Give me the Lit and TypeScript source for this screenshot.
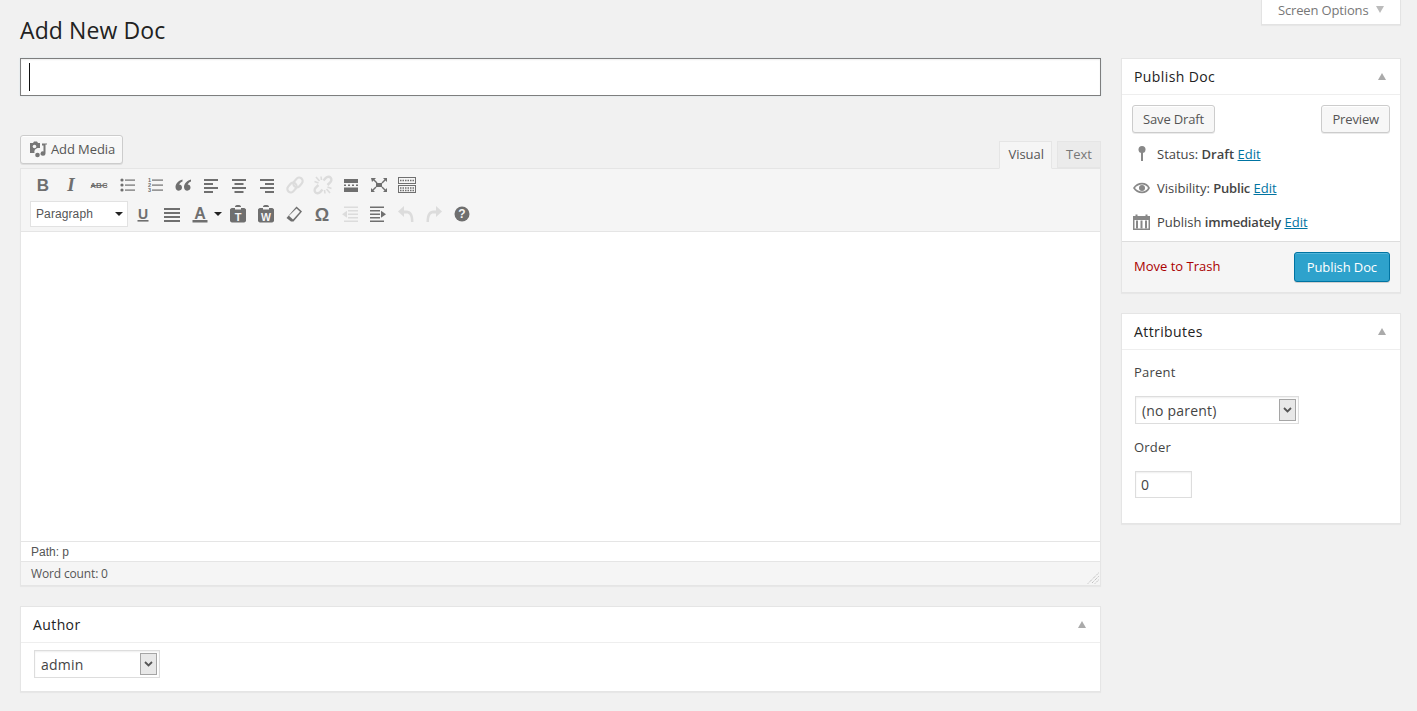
import { LitElement, html, css, svg } from "lit";
import { customElement } from "lit/decorators.js";

const G = "#6f6f6f";
const D = "#dcdcdc";

const lines = (rows: [number, number, number, number?][], c: string) =>
  rows.map(([x, y, w, h]) => svg`<rect x=${x} y=${y} width=${w} height=${h ?? 2} fill=${c}></rect>`);

const glyph = (t: string, size: number, c: string, font: string, weight = "700", style = "normal", y = 15.5, x = 10) =>
  svg`<text x=${x} y=${y} text-anchor="middle" font-family=${font} font-size=${size} font-weight=${weight} font-style=${style} fill=${c}>${t}</text>`;

const SERIF = "'Liberation Serif', serif";
const SANS = "'Liberation Sans', sans-serif";

const ICONS: Record<string, (c: string) => unknown> = {
  bold: (c) => glyph("B", 17, c, SANS, "700", "normal", 16),
  italic: (c) => glyph("I", 19, c, SERIF, "700", "italic", 16),
  strike: (c) => svg`${glyph("ABC", 8, c, SANS, "700", "normal", 13)}<rect x="2" y="10" width="16" height="1" fill=${c}></rect>`,
  ul: (c) => svg`<circle cx="5" cy="5" r="1.6" fill=${c}></circle><circle cx="5" cy="10" r="1.6" fill=${c}></circle><circle cx="5" cy="15" r="1.6" fill=${c}></circle>${lines([[8, 4.5, 10, 1.2], [8, 9.5, 10, 1.2], [8, 14.5, 10, 1.2]], c)}`,
  ol: (c) => svg`${glyph("1", 5.5, c, SANS, "700", "normal", 7, 4.5)}${glyph("2", 5.5, c, SANS, "700", "normal", 12, 4.5)}${glyph("3", 5.5, c, SANS, "700", "normal", 17, 4.5)}${lines([[7, 4.5, 11, 1.2], [7, 9.5, 11, 1.2], [7, 14.5, 11, 1.2]], c)}`,
  quote: (c) => svg`<path d="M9.5 4.5C6 5.500 2.500 8.400 2.500 12c0 2.200 1.400 3.700 3.300 3.700s3.200-1.400 3.200-3.100-1.200-3-2.900-3c.5-1.300 1.900-2.500 3.400-3.200zM18 4.500c-3.500 1-7 3.900-7 7.500 0 2.200 1.400 3.700 3.300 3.700s3.200-1.400 3.200-3.100-1.200-3-2.900-3c.5-1.300 1.900-2.500 3.400-3.200z" fill=${c}></path>`,
  left: (c) => svg`${lines([[3, 4, 14], [3, 8, 9], [3, 12, 14], [3, 16, 9]], c)}`,
  center: (c) => svg`${lines([[3, 4, 14], [5.5, 8, 9], [3, 12, 14], [5.5, 16, 9]], c)}`,
  right: (c) => svg`${lines([[3, 4, 14], [8, 8, 9], [3, 12, 14], [8, 16, 9]], c)}`,
  link: (c) => svg`<g fill="none" stroke=${c} stroke-width="2.2"><rect x="9.500" y="2.200" width="7" height="10.500" rx="3.500" transform="rotate(40 13 7.500)"></rect><rect x="3.500" y="7.300" width="7" height="10.500" rx="3.500" transform="rotate(40 7 12.500)"></rect></g>`,
  unlink: (c) => svg`<g fill="none" stroke=${c} stroke-width="2.400"><path d="M10.500 5.500 12.800 2.900c1.600-1.500 3.800-1.500 4.900-.2s.9 3.500-.7 5L14.500 10"></path><path d="M9.500 14.500 7.200 17.100c-1.600 1.500-3.800 1.500-4.900.2s-.9-3.500.7-5L5.500 10"></path><path d="M3 2l3.500 4M1.500 6.500 5.500 8M17 18l-3.500-4M18.500 13.500 14.500 12M8 1.500 8.500 5M12 18.500 11.500 15" stroke-width="1.600"></path></g>`,
  hr: (c) => svg`${lines([[3, 4, 14, 4], [3, 12.5, 14, 4.5], [3, 9.5, 2, 1.5], [7, 9.5, 2, 1.5], [11, 9.5, 2, 1.5], [15, 9.5, 2, 1.5]], c)}`,
  full: (c) => svg`<path d="M2 3h5L5.500 4.500 8.500 7.500 7.500 8.500 4.500 5.500 3 7zM18 3v4l-1.500-1.500-3 3-1-1 3-3L14 3zM2 17v-4l1.500 1.500 3-3 1 1-3 3L6 17zM18 17h-4l1.500-1.500-3-3 1-1 3 3L18 13z" fill=${c}></path><rect x="7" y="8" width="6" height="4" fill=${c}></rect>`,
  kitchen: (c) => svg`<g fill="none" stroke=${c}><rect x="1.500" y="2.500" width="17" height="6"></rect><rect x="1.500" y="10.500" width="17" height="7"></rect></g><path d="M3 5.500h14M3 13h14M3 15.500h14" stroke=${c} stroke-width="1.500" stroke-dasharray="1.500 1"></path>`,
  under: (c) => svg`${glyph("U", 14, c, SANS, "700", "normal", 14.5)}<rect x="4.500" y="16" width="11" height="1.600" fill=${c}></rect>`,
  justify: (c) => svg`${lines([[2, 4, 16], [2, 8, 16], [2, 12, 16], [2, 16, 16]], c)}`,
  color: (c) => svg`${glyph("A", 16, c, SANS, "700", "normal", 15)}<rect x="2.500" y="16" width="15" height="2.500" fill=${c}></rect>`,
  pastetext: (c) => svg`<path d="M7 2.500c0-.8 1-1.500 3-1.500s3 .7 3 1.500V4h2.500c.8 0 2.500.7 2.500 1.500V17c0 .8-1.700 1.500-2.500 1.500h-11C3.700 18.500 2 17.800 2 17V5.500C2 4.700 3.700 4 4.500 4H7z" fill=${c}></path><rect x="7" y="3" width="6" height="2.500" fill="#f5f5f5"></rect>${glyph("T", 11, "#f5f5f5", SANS, "700", "normal", 16.500)}`,
  pasteword: (c) => svg`<path d="M7 2.500c0-.8 1-1.500 3-1.500s3 .7 3 1.500V4h2.500c.8 0 2.500.7 2.500 1.500V17c0 .8-1.700 1.500-2.500 1.500h-11C3.700 18.500 2 17.800 2 17V5.500C2 4.700 3.700 4 4.500 4H7z" fill=${c}></path><rect x="7" y="3" width="6" height="2.500" fill="#f5f5f5"></rect>${glyph("W", 10.500, "#f5f5f5", SANS, "700", "normal", 16.500)}`,
  eraser: (c) => svg`<path d="M12.500 2.500 18 7.500 9.500 17.500H7L2.500 14z" fill=${c}></path><path d="M12.500 4.500 16 7.800 9 15.500 5 11.800z" fill="#f5f5f5"></path>`,
  omega: (c) => glyph("Ω", 18, c, SANS, "700", "normal", 16.500),
  outdent: (c) => svg`${lines([[4, 2.500, 14, 1.500], [8, 6, 10, 1.500], [8, 9.500, 10, 1.500], [8, 13, 10, 1.500], [4, 16.500, 14, 1.500]], c)}<path d="M2 10.200l5-3.500v7z" fill=${c}></path>`,
  indent: (c) => svg`${lines([[2, 2.500, 14, 1.500], [2, 6, 10, 1.500], [2, 9.500, 10, 1.500], [2, 13, 10, 1.500], [2, 16.500, 14, 1.500]], c)}<path d="M18 10.200l-5-3.500v7z" fill=${c}></path>`,
  undo: (c) => svg`<path d="M8 2 2 7.500 8 13V9.500h2.500c3 0 4.500 2.500 4.500 8.500h2.500c0-8-2.500-11.500-7-11.500H8z" fill=${c}></path>`,
  redo: (c) => svg`<path d="M12 2 18 7.500 12 13V9.500H9.500c-3 0-4.500 2.500-4.500 8.500H2.500c0-8 2.500-11.500 7-11.500H12z" fill=${c}></path>`,
  help: (c) => svg`<circle cx="10" cy="10" r="7.500" fill=${c}></circle>${glyph("?", 12, "#f5f5f5", SANS, "700", "normal", 14.300)}`,
};

const ROW1: [string, boolean?][] = [
  ["bold"], ["italic"], ["strike"], ["ul"], ["ol"], ["quote"], ["left"], ["center"], ["right"],
  ["link", true], ["unlink", true], ["hr"], ["full"], ["kitchen"],
];
const ROW2A: [string, boolean?][] = [["under"], ["justify"]];
const ROW2B: [string, boolean?][] = [
  ["pastetext"], ["pasteword"], ["eraser"], ["omega"], ["outdent", true], ["indent"], ["undo", true], ["redo", true], ["help"],
];

@customElement("app-root")
export class AppRoot extends LitElement {
  static styles = css`
    :host { display: block; background: #f1f1f1; font-family: "Open Sans", sans-serif; font-size: 13px; color: #444; height: 711px; overflow: hidden; }
    * { box-sizing: border-box; }
    .wrap { padding: 0 16px 0 20px; }
    .head { display: flex; justify-content: space-between; align-items: flex-start; height: 58px; }
    h1 { margin: 0; padding-top: 15px; font-size: 23px; line-height: 31px; font-weight: 400; color: #222; letter-spacing: .1px; }
    .screen { width: 140px; height: 25px; background: #fff; border: 1px solid #e3e3e3; border-top: 0; box-shadow: 0 1px 1px rgba(0,0,0,.04); color: #777; display: flex; align-items: center; padding-left: 16px; gap: 7px; line-height: 20px; padding-bottom: 5px; letter-spacing: -.15px; }
    .tri-down { width: 0; height: 0; border: 4.5px solid transparent; border-top: 7px solid #bbb; border-bottom: 0; }
    .cols { display: grid; grid-template-columns: 1081px 280px; column-gap: 20px; align-items: start; }
    .title { height: 38px; background: #fff; border: 1px solid #7e7e7e; box-shadow: inset 0 1px 2px rgba(0,0,0,.07), 0 0 2px rgba(30,140,190,.1); padding: 4px 8px; }
    .caret { width: 1px; height: 28px; background: #111; }
    .tabsrow { margin-top: 39px; height: 34px; margin-bottom: -1px; display: flex; justify-content: space-between; align-items: flex-start; }
    .btn { display: inline-flex; align-items: center; height: 28px; background: #f7f7f7; border: 1px solid #ccc; border-radius: 3px; box-shadow: inset 0 1px 0 #fff, 0 1px 0 rgba(0,0,0,.08); color: #555; padding: 0 10px; line-height: 26px; white-space: nowrap; }
    .media { height: 29px; padding: 0 7px 2px 7px; gap: 3px; letter-spacing: -.1px; }
    .media svg { width: 20px; height: 20px; display: block; margin-top: 2px; }
    .tabs { display: flex; gap: 5px; margin-top: 6px; }
    .tab { padding: 0 8px; border: 1px solid #e5e5e5; background: #ebebeb; color: #777; line-height: 25px; position: relative; height: 27px; }
    .tab.on { padding: 0 7px 0 8px; background: #f5f5f5; color: #555; border-bottom-color: #f5f5f5; height: 28px; z-index: 1; }
    .editor { border: 1px solid #e5e5e5; background: #fff; box-shadow: 0 1px 1px rgba(0,0,0,.04); }
    .tools { height: 63px; background: #f5f5f5; border-bottom: 1px solid #e5e5e5; padding: 1px 0 0 8px; }
    .row { display: flex; align-items: center; height: 29px; }
    .ib { width: 28px; height: 28px; display: flex; align-items: center; justify-content: center; flex: none; }
    .ib svg { width: 20px; height: 20px; display: block; }
    .row.second { margin-left: 1px; }
    .fmt { width: 98px; height: 26px; flex: none; background: #fff; border: 1px solid #e2e2e2; font: 12px "Liberation Sans", sans-serif; letter-spacing: .1px; color: #555; display: flex; align-items: center; justify-content: space-between; padding: 0 4px 0 5px; margin-right: 1px; }
    .caret-down { width: 0; height: 0; border: 4px solid transparent; border-top: 4px solid #222; border-bottom: 0; }
    .just { margin-left: 1px; display: flex; }
    .colorbtn { width: 38px; height: 28px; display: flex; align-items: center; padding-left: 4px; gap: 4px; flex: none; }
    .colorbtn svg { width: 20px; height: 20px; display: block; }
    .content { height: 309px; background: #fff; }
    .path { height: 21px; border-top: 1px solid #e5e5e5; border-bottom: 1px solid #e5e5e5; padding: 0 10px; font: 12px/20px "Liberation Sans", sans-serif; color: #555; }
    .count { height: 23px; background: #f5f5f5; padding: 0 1px 0 10px; font-size: 12px; line-height: 24px; letter-spacing: -.15px; color: #555; display: flex; justify-content: space-between; align-items: center; }
    .count svg { width: 12px; height: 12px; display: block; margin-top: 9px; }
    .box { background: #fff; border: 1px solid #e5e5e5; box-shadow: 0 1px 1px rgba(0,0,0,.04); }
    .box + .box { margin-top: 20px; }
    .boxhead { height: 36px; border-bottom: 1px solid #eee; display: flex; justify-content: space-between; align-items: center; padding: 0 14px 0 12px; font-size: 14px; font-weight: 400; color: #222; letter-spacing: .4px; }
    .tri-up { width: 0; height: 0; border: 4.5px solid transparent; border-bottom: 7px solid #aaa; border-top: 0; }
    .author { margin-top: 20px; height: 86px; }
    .author .body { padding: 7px 13px; }
    .sel { display: flex; align-items: center; justify-content: space-between; background: #fff; border: 1px solid #ddd; height: 28px; font-size: 14px; letter-spacing: .2px; color: #444; padding: 0 2px 0 6px; box-shadow: inset 0 1px 2px rgba(0,0,0,.07); }
    .sel .arrow { width: 17px; height: 22px; background: #e8e8e8; border: 1px solid #a5a5a5; display: flex; align-items: center; justify-content: center; }
    .sel svg { width: 9px; height: 6px; display: block; }
    .acts { display: flex; justify-content: space-between; padding: 10px 10px 0; }
    .acts .btn { letter-spacing: -.15px; }
    .misc { display: flex; align-items: center; height: 34px; padding-left: 10px; }
    .misc svg { width: 20px; height: 20px; flex: none; display: block; margin-right: 5px; }
    .misc b { font-weight: 600; }
    .misc b.tight { letter-spacing: -.2px; }
    .misc a { color: #0074a2; text-decoration: underline; }
    .info { padding-top: 4px; padding-bottom: 2px; }
    .foot { height: 51px; background: #f5f5f5; border-top: 1px solid #ddd; display: flex; justify-content: space-between; align-items: center; padding: 0 10px 0 12px; }
    .trash { color: #a00; padding-bottom: 2px; }
    .primary { background: #2ea2cc; border: 1px solid #0074a2; color: #fff; border-radius: 3px; height: 30px; line-height: 28px; padding: 0 12px; letter-spacing: -.1px; box-shadow: inset 0 1px 0 rgba(120,200,230,.5), 0 1px 0 rgba(0,0,0,.15); }
    .attrs { height: 211px; padding: 0; }
    .attrs .body { padding: 0 12px; }
    .lab { font-weight: 400; color: #444; line-height: 18px; letter-spacing: .2px; }
    .lab.p { padding-top: 13px; }
    .attrs .sel { width: 164px; margin: 15px 0 0 1px; }
    .lab.o { margin-top: 14px; }
    .num { width: 57px; height: 27px; margin: 15px 0 0 1px; background: #fff; border: 1px solid #ddd; box-shadow: inset 0 1px 2px rgba(0,0,0,.07); font-size: 14px; padding: 0 5px; line-height: 26px; }
    .authsel { width: 126px; }
  `;

  private ib([name, off]: [string, boolean?]) {
    return html`<span class="ib"><svg viewBox="0 0 20 20">${ICONS[name](off ? D : G)}</svg></span>`;
  }

  private sel(label: string, cls = "") {
    return html`<div class="sel ${cls}"><span>${label}</span><span class="arrow"><svg viewBox="0 0 9 6"><path d="M1 1l3.500 3.500L8 1" fill="none" stroke="#555" stroke-width="1.800"></path></svg></span></div>`;
  }

  render() {
    return html`
      <div class="wrap">
        <div class="head">
          <h1>Add New Doc</h1>
          <div class="screen"><span>Screen Options</span><span class="tri-down"></span></div>
        </div>
        <div class="cols">
          <div class="main">
            <div class="title"><div class="caret"></div></div>
            <div class="tabsrow">
              <span class="btn media">
                <svg viewBox="0 0 20 20"><path d="M2 3h3l1-1.500h3L10 3h2v5H9.500a4 4 0 0 0-3 5H2z" fill="#777"></path><circle cx="6.500" cy="6.500" r="1.800" fill="#f7f7f7"></circle><path d="M14 3.500h5v1h-1.500v9a2.500 2.200 0 1 1-2-2.100V5.500H14z" fill="#777"></path><circle cx="9.500" cy="15" r="2.300" fill="#777"></circle></svg>
                <span>Add Media</span>
              </span>
              <div class="tabs"><span class="tab on">Visual</span><span class="tab">Text</span></div>
            </div>
            <div class="editor">
              <div class="tools">
                <div class="row">${ROW1.map((i) => this.ib(i))}</div>
                <div class="row second">
                  <div class="fmt"><span>Paragraph</span><span class="caret-down"></span></div>
                  ${this.ib(ROW2A[0])}
                  <span class="just">${this.ib(ROW2A[1])}</span>
                  <span class="colorbtn"><svg viewBox="0 0 20 20">${ICONS.color(G)}</svg><span class="caret-down"></span></span>
                  ${ROW2B.map((i) => this.ib(i))}
                </div>
              </div>
              <div class="content"></div>
              <div class="path">Path: p</div>
              <div class="count"><span>Word count: 0</span>
                <svg viewBox="0 0 12 12"><path d="M11.500 1 1 11.500M11.500 4.500 4.500 11.500M11.500 8 8 11.500" stroke="#aaa" stroke-width="1" stroke-dasharray="1 1" fill="none"></path></svg>
              </div>
            </div>
            <div class="box author">
              <div class="boxhead"><span>Author</span><span class="tri-up"></span></div>
              <div class="body">${this.sel("admin", "authsel")}</div>
            </div>
          </div>
          <div class="side">
            <div class="box">
              <div class="boxhead"><span>Publish Doc</span><span class="tri-up"></span></div>
              <div class="acts"><span class="btn">Save Draft</span><span class="btn">Preview</span></div>
              <div class="info">
                <div class="misc"><svg viewBox="0 0 20 20"><circle cx="10" cy="5.500" r="3.500" fill="#888"></circle><rect x="9" y="7" width="2" height="10" fill="#888"></rect></svg><span>Status: <b>Draft</b> <a>Edit</a></span></div>
                <div class="misc"><svg viewBox="0 0 20 20"><path d="M1 10c2-3.500 5.500-5.200 9-5.200s6.500 1.700 8 5.200c-1.500 3.500-4.500 5.200-8 5.200S3 13.500 1 10z" fill="#888"></path><path d="M3 10c1.700-2.200 4.300-3.500 7-3.500s4.800 1.300 6 3.500c-1.200 2.200-3.300 3.500-6 3.500S4.700 12.200 3 10z" fill="#fff"></path><circle cx="10" cy="10" r="3" fill="#888"></circle></svg><span>Visibility: <b class="tight">Public</b> <a>Edit</a></span></div>
                <div class="misc"><svg viewBox="0 0 20 20"><path d="M1 4h2.500V2.500h2V4h8V2.500h2V4H18v14H1z" fill="#888"></path><rect x="2.500" y="8" width="14" height="8.500" fill="#fff"></rect><path d="M4 8.500h2v8H4zM8.500 8.500h2v8h-2zM13 8.500h2v8h-2z" fill="#888"></path></svg><span>Publish <b class="tight">immediately</b> <a>Edit</a></span></div>
              </div>
              <div class="foot"><span class="trash">Move to Trash</span><span class="primary">Publish Doc</span></div>
            </div>
            <div class="box attrs">
              <div class="boxhead"><span>Attributes</span><span class="tri-up"></span></div>
              <div class="body">
                <div class="lab p">Parent</div>
                ${this.sel("(no parent)")}
                <div class="lab o">Order</div>
                <div class="num">0</div>
              </div>
            </div>
          </div>
        </div>
      </div>
    `;
  }
}
